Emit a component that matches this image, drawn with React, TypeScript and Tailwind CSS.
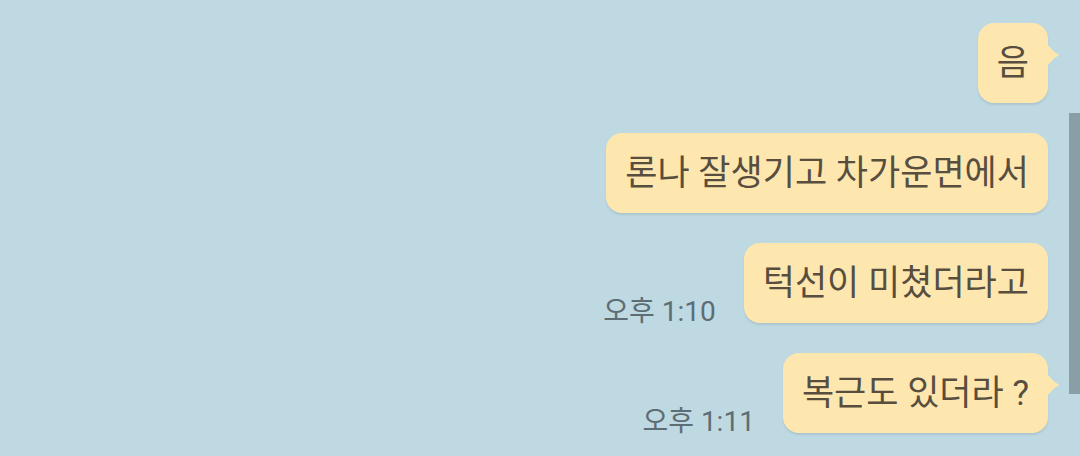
const font = { fontFamily: 'Roboto, "Noto Sans CJK KR", "Noto Sans", sans-serif' };

type Msg = { text: string; time?: string; tail?: boolean };

const messages: Msg[] = [
  { text: "음", tail: true },
  { text: "론나 잘생기고 차가운면에서" },
  { text: "턱선이 미쳤더라고", time: "오후 1:10" },
  { text: "복근도 있더라 ?", time: "오후 1:11", tail: true },
];

const Tail = () => (
  <svg
    className="absolute right-[-12px] top-[19px]"
    width="14"
    height="26"
    viewBox="0 0 14 26"
  >
    <path d="M0 0 Q6 9 12.5 12.5 Q13.5 13 12.5 13.5 Q6 17 0 26 Z" fill="#fee7af" />
  </svg>
);

const Bubble = ({ msg }: { msg: Msg }) => (
  <div className="flex items-end gap-[28px]">
    {msg.time && (
      <span className="text-[28px] leading-none mb-[-3px] text-[#5d6d74]">{msg.time}</span>
    )}
    <div className="relative h-[80px] flex items-center px-[19px] rounded-[16px] bg-[#fee7af] shadow-[0_2px_2px_rgba(90,110,120,0.18)]">
      <span className="text-[35px] leading-none text-[#574e40] whitespace-nowrap">{msg.text}</span>
      {msg.tail && <Tail />}
    </div>
  </div>
);

export default function App() {
  return (
    <div
      className="relative w-[1080px] h-[456px] overflow-hidden bg-[#bfd9e3] flex flex-col items-end gap-[30px] pt-[23px] pr-[32px]"
      style={font}
    >
      {messages.map((m, i) => (
        <Bubble key={i} msg={m} />
      ))}
      <div className="absolute right-0 top-[113px] w-[11px] h-[281px] bg-[#8a9ea6]" />
    </div>
  );
}
